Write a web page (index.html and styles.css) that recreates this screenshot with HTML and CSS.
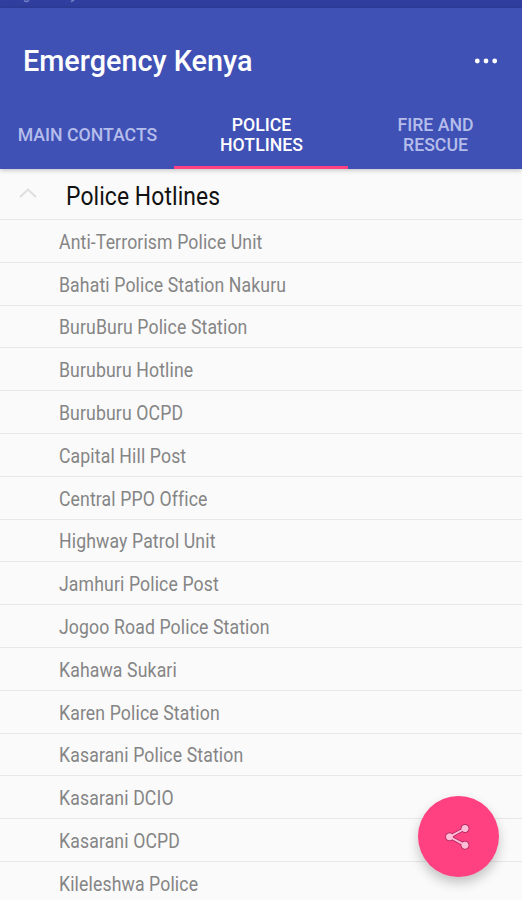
FILE: index.html
```html
<!DOCTYPE html>
<html lang="en">
<head>
    <meta charset="UTF-8">
    <meta name="viewport" content="width=device-width, initial-scale=1.0">
    <title>Emergency Kenya</title>
    <link rel="stylesheet" href="styles.css">
</head>
<body>
    <div class="status-bar">
        <svg width="90" height="8" viewBox="0 0 90 8" fill="none" stroke="#7680c4" stroke-width="1.4">
            <path d="M24 0.5Q26.5 2.5 29 0.5M71 1.5L74 0"/>
        </svg>
    </div>
    <header class="app-header">
        <div class="toolbar">
            <h1>Emergency Kenya</h1>
            <button class="menu-btn" aria-label="More options">
                <svg width="24" height="6" viewBox="0 0 24 6" fill="#fff">
                    <circle cx="3.3" cy="3" r="2.4"/>
                    <circle cx="12" cy="3" r="2.4"/>
                    <circle cx="20.7" cy="3" r="2.4"/>
                </svg>
            </button>
        </div>
        <nav class="tabs">
            <a class="tab">MAIN CONTACTS</a>
            <a class="tab active">POLICE<br>HOTLINES</a>
            <a class="tab">FIRE AND<br>RESCUE</a>
        </nav>
    </header>

    <main>
        <div class="group">
            <svg class="chevron" width="18" height="10" viewBox="0 0 18 10" fill="none" stroke="#dedede" stroke-width="2">
                <path d="M1 9L9 1.5L17 9"/>
            </svg>
            <h2>Police Hotlines</h2>
        </div>
        <ul class="hotlines">
            <li><span>Anti-Terrorism Police Unit</span></li>
            <li><span>Bahati Police Station Nakuru</span></li>
            <li><span>BuruBuru Police Station</span></li>
            <li><span>Buruburu Hotline</span></li>
            <li><span>Buruburu OCPD</span></li>
            <li><span>Capital Hill Post</span></li>
            <li><span>Central PPO Office</span></li>
            <li><span>Highway Patrol Unit</span></li>
            <li><span>Jamhuri Police Post</span></li>
            <li><span>Jogoo Road Police Station</span></li>
            <li><span>Kahawa Sukari</span></li>
            <li><span>Karen Police Station</span></li>
            <li><span>Kasarani Police Station</span></li>
            <li><span>Kasarani DCIO</span></li>
            <li><span>Kasarani OCPD</span></li>
            <li><span>Kileleshwa Police</span></li>
        </ul>
    </main>

    <button class="fab" aria-label="Share">
        <svg width="28" height="30" viewBox="0 0 28 30">
            <g fill="#b52c63" stroke="#b52c63">
                <path d="M20 6.5L4.5 14.8L20 23.2" fill="none" stroke-width="3.6"/>
                <circle cx="20" cy="6.5" r="4"/>
                <circle cx="4.5" cy="14.8" r="4"/>
                <circle cx="20" cy="23.2" r="4"/>
            </g>
            <g fill="#ffbdd6" stroke="#ffbdd6">
                <path d="M20 6.5L4.5 14.8L20 23.2" fill="none" stroke-width="1.9"/>
                <circle cx="20" cy="6.5" r="3.1"/>
                <circle cx="4.5" cy="14.8" r="3.1"/>
                <circle cx="20" cy="23.2" r="3.1"/>
            </g>
        </svg>
    </button>
</body>
</html>
```

FILE: styles.css
```css
:root {
    --primary: #3f51b5;
    --primary-dark: #303f9f;
    --accent: #ff4081;
    --background: #fafafa;
}

* {
    box-sizing: border-box;
}

body {
    margin: 0;
    height: 900px;
    overflow: hidden;
    font-family: Roboto, sans-serif;
    background-color: var(--background);
}

button {
    padding: 0;
    border: none;
    background: none;
    cursor: pointer;
}

.status-bar {
    display: flex;
    height: 8px;
    background-color: var(--primary-dark);
}

.app-header {
    position: relative;
    height: 161px;
    background-color: var(--primary);
    box-shadow: 0 1px 5px rgba(0, 0, 0, 0.25);
}

.toolbar {
    display: flex;
    align-items: center;
    justify-content: space-between;
    height: 92px;
    padding: 13px 24px 0 23px;
}

h1 {
    margin: 0;
    font-size: 28.8px;
    font-weight: 500;
    line-height: 36px;
    color: #fff;
}

.menu-btn {
    display: flex;
}

.tabs {
    display: flex;
    height: 69px;
}

.tab {
    flex: 1;
    display: flex;
    align-items: center;
    justify-content: center;
    padding: 4px 0 0 1px;
    border-bottom: 3px solid transparent;
    font-size: 17.7px;
    font-weight: 500;
    line-height: 20px;
    text-align: center;
    color: #b5bdeb;
}

.tab.active {
    border-bottom-color: var(--accent);
    color: #fff;
}

.group {
    display: flex;
    align-items: center;
    height: 51px;
    padding: 3px 0 0 19px;
    border-bottom: 1px solid #e8e8e8;
}

.chevron {
    margin: 0 28.5px 5px 0;
}

h2 {
    margin: 0;
    font-size: 26px;
    font-weight: 400;
    line-height: 32px;
    letter-spacing: 0.1px;
    color: #111;
    transform: scaleX(0.88);
    transform-origin: left;
}

.hotlines {
    margin: 0;
    padding: 0;
    list-style: none;
}

.hotlines li {
    display: flex;
    align-items: center;
    height: 42.8px;
    padding: 2px 0 0 58.5px;
    border-bottom: 1px solid #e8e8e8;
    font-size: 20.4px;
    letter-spacing: 0.15px;
    color: #858585;
}

.hotlines span {
    transform: scaleX(0.865);
    transform-origin: left;
}

.fab {
    position: fixed;
    right: 23px;
    bottom: 23px;
    display: flex;
    align-items: center;
    justify-content: center;
    width: 81px;
    height: 81px;
    border-radius: 50%;
    background-color: var(--accent);
    box-shadow: 0 6px 12px rgba(0, 0, 0, 0.22);
}
```
